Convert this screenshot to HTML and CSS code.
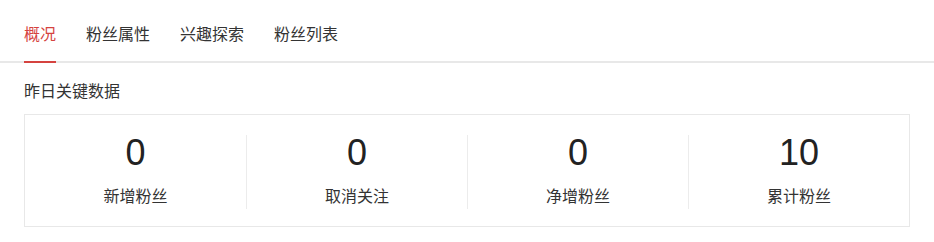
FILE: index.html
```html
<!DOCTYPE html>
<html lang="zh-CN">
<head>
    <meta charset="UTF-8">
    <meta name="viewport" content="width=device-width, initial-scale=1.0">
    <title>粉丝概况</title>
    <link rel="stylesheet" href="styles.css">
</head>
<body>
    <div class="tabs">
        <div class="tab active">概况</div>
        <div class="tab">粉丝属性</div>
        <div class="tab">兴趣探索</div>
        <div class="tab">粉丝列表</div>
    </div>

    <div class="section-title">昨日关键数据</div>

    <div class="stats">
        <div class="stat">
            <div class="stat-num">0</div>
            <div class="stat-label">新增粉丝</div>
        </div>
        <div class="stat">
            <div class="stat-num">0</div>
            <div class="stat-label">取消关注</div>
        </div>
        <div class="stat">
            <div class="stat-num">0</div>
            <div class="stat-label">净增粉丝</div>
        </div>
        <div class="stat">
            <div class="stat-num">10</div>
            <div class="stat-label">累计粉丝</div>
        </div>
    </div>
</body>
</html>
```

FILE: styles.css
```css
body {
    margin: 0;
    background: #fff;
    color: #333;
    font-family: "Liberation Sans", Arial, "Noto Sans CJK SC", sans-serif;
    font-size: 16px;
}

.tabs {
    display: flex;
    gap: 30px;
    padding: 0 24px;
    border-bottom: 2px solid #e8e8e8;
}

.tab {
    padding: 23px 0 14px;
    line-height: 24px;
    color: #333;
    cursor: pointer;
}

.tab.active {
    color: #d5433f;
    border-bottom: 2px solid #d5433f;
    margin-bottom: -2px;
}

.section-title {
    margin: 17px 24px 0;
    line-height: 24px;
    color: #333;
}

.stats {
    display: grid;
    grid-template-columns: repeat(4, 1fr);
    margin: 10px 24px 0;
    padding: 20px 0 17px;
    border: 1px solid #e8e8e8;
}

.stat {
    text-align: center;
}

.stat + .stat {
    border-left: 1px solid #ececec;
}

.stat-num {
    font-size: 36px;
    line-height: 36px;
    color: #222;
}

.stat-label {
    margin-top: 14px;
    line-height: 24px;
    color: #333;
}
```
